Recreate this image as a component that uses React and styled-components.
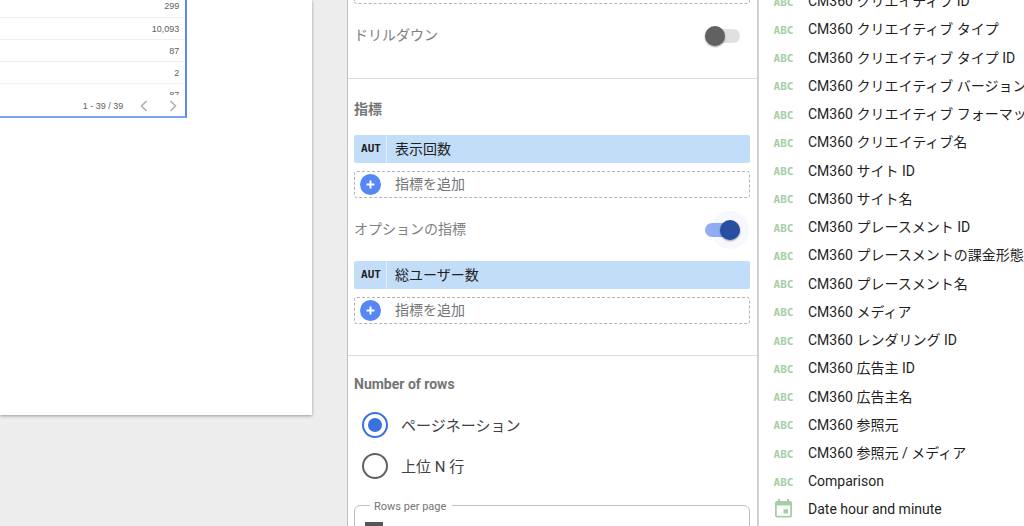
import React, {useState} from 'react';
import styled, {createGlobalStyle} from 'styled-components';

const GlobalStyle = createGlobalStyle`
    * {
        box-sizing: border-box;
    }
    body {
        margin: 0;
        background: #ededed;
        font-family: Roboto, "Noto Sans CJK JP", sans-serif;
        font-size: 14px;
        overflow: hidden;
    }
`

const Layout = styled.div`
    display: grid;
    grid-template-columns: minmax(0, 1fr) 412px 265px;
    height: 100vh;
    overflow: hidden;
`

const Canvas = styled.main`
    background: #ededed;
    padding-right: 35px;
    min-width: 0;
`

const ReportPage = styled.div`
    min-height: 415px;
    background: white;
    box-shadow: 0 1px 3px rgba(0, 0, 0, 0.35);
`

const Chart = styled.div`
    width: 60%;
    border-right: 2px solid #5a8cf0;
    border-bottom: 2px solid #7ba2f2;
    font-family: "Liberation Sans", sans-serif;
    font-size: 9px;
    color: #616161;
`

const ChartBody = styled.div`
    display: flex;
    flex-direction: column;
    justify-content: flex-end;
    height: 95px;
    overflow: hidden;
`

const ChartTable = styled.table`
    width: 100%;
    border-collapse: collapse;
    margin-bottom: -11px;

    td {
        height: 22px;
        padding: 0 6px 0 0;
        border-bottom: 1px solid #f0f0f0;
        text-align: right;
        line-height: 20px;
    }
`

const Pager = styled.div`
    display: flex;
    justify-content: flex-end;
    align-items: center;
    height: 21px;
    padding-right: 4px;
`

const PagerButton = styled.button`
    display: flex;
    justify-content: center;
    width: 16px;
    margin-left: 13px;
    padding: 0;
    border: none;
    background: none;
    cursor: pointer;
`

const Panel = styled.section`
    background: white;
    border-left: 1px solid #bdc1c6;
    border-right: 2px solid #d0d0d8;
    overflow: hidden;
`

const Section = styled.div`
    display: flex;
    flex-direction: column;
    padding: 0 7px 0 6px;
    border-bottom: ${props => props.last ? "none" : "1px solid #dcdcdc"};
    height: ${props => props.height || "auto"};
`

const DropZone = styled.div`
    height: 4px;
    border: 1px dashed #b4b4b4;
    border-top: none;
    border-radius: 0 0 3px 3px;
`

const Heading = styled.h3`
    margin: 0;
    padding-top: ${props => props.spaced ? "20px" : "18px"};
    font-size: 14px;
    line-height: 20px;
    font-weight: bold;
    color: #757575;
`

const ToggleRow = styled.label`
    display: flex;
    justify-content: space-between;
    align-items: center;
    height: 63px;
    padding-right: 10px;
    color: #808080;
`

const RowText = styled.span`
    padding-bottom: 3px;
`

const Toggle = styled.input`
    appearance: none;
    position: relative;
    width: 35px;
    height: 20px;
    margin: 0;
    cursor: pointer;

    &::before {
        content: "";
        position: absolute;
        top: 3px;
        left: 0;
        width: 35px;
        height: 14px;
        border-radius: 7px;
        background: #e0e0e0;
    }
    &::after {
        content: "";
        position: absolute;
        top: 0;
        left: 0;
        width: 20px;
        height: 20px;
        border-radius: 50%;
        background: #616161;
        box-shadow: 0 1px 2px rgba(0, 0, 0, 0.4);
    }
    &:checked::before {
        background: #91aff2;
    }
    &:checked::after {
        left: 15px;
        background: #274ea0;
        box-shadow: 0 1px 2px rgba(0, 0, 0, 0.4), 0 0 0 9px rgba(80, 110, 240, 0.05);
    }
`

const Chip = styled.div`
    display: flex;
    align-items: center;
    height: 28px;
    margin-top: ${props => props.spaced ? "16px" : "0"};
    border-radius: 2px;
    background: #c2ddf8;
    color: #212121;
`

const ChipType = styled.span`
    width: 33px;
    padding-left: 2px;
    line-height: 28px;
    border-right: 1px solid #e4f0fc;
    font-family: "DejaVu Sans Mono", monospace;
    font-size: 11px;
    font-weight: bold;
    text-align: center;
`

const ChipName = styled.span`
    padding: 0 0 2px 8px;
`

const AddButton = styled.button`
    display: flex;
    align-items: center;
    gap: 14px;
    height: 27px;
    margin-top: 8px;
    padding: 0 5px;
    border: 1px dashed #b4b4b4;
    border-radius: 3px;
    background: white;
    color: #757575;
    font: inherit;
    cursor: pointer;
`

const AddText = styled.span`
    padding-bottom: 3px;
`

const RadioGroup = styled.div`
    display: flex;
    flex-direction: column;
    gap: 15px;
    padding: 18px 0 0 8px;
`

const RadioLabel = styled.label`
    display: flex;
    align-items: center;
    gap: 13px;
    height: 26px;
    font-size: 15px;
    color: #424242;
`

const Radio = styled.input`
    appearance: none;
    width: 26px;
    height: 26px;
    margin: 0;
    padding: 4px;
    border: 2px solid #5f6368;
    border-radius: 50%;
    cursor: pointer;

    &:checked {
        border-color: #3871e0;
        background: #3871e0;
        background-clip: content-box;
    }
`

const RadioText = styled.span`
    padding-bottom: 2px;
`

const RowsField = styled.fieldset`
    margin: 17px 0 0;
    padding: 8px 10px;
    border: 1px solid #c0c0c0;
    border-radius: 6px;
    min-width: 0;

    legend {
        margin-left: 5px;
        padding: 4px 6px 0 4px;
        font-size: 11px;
        line-height: 14px;
        color: #757575;
    }
`

const RowsValue = styled.div`
    width: 18px;
    height: 14px;
    background: #555;
`

const Fields = styled.aside`
    background: white;
    overflow: hidden;
`

const FieldList = styled.ul`
    display: flex;
    flex-direction: column;
    justify-content: space-between;
    height: calc(100vh + 11px);
    margin: -14px 0 0;
    padding: 0;
    list-style: none;
`

const Field = styled.li`
    display: flex;
    flex-shrink: 0;
    align-items: center;
    height: 28px;
    color: #1f1f1f;
    white-space: nowrap;
`

const FieldType = styled.span`
    display: flex;
    justify-content: center;
    flex-shrink: 0;
    width: 49px;
    padding-top: ${props => props.text ? "4px" : "0"};
    font-family: "DejaVu Sans Mono", monospace;
    font-size: 11px;
    font-weight: bold;
    color: #a5cfa5;
`

const values = ["299", "10,093", "87", "2", "87"];

const fields = [
    "CM360 クリエイティブ ID",
    "CM360 クリエイティブ タイプ",
    "CM360 クリエイティブ タイプ ID",
    "CM360 クリエイティブ バージョン",
    "CM360 クリエイティブ フォーマット",
    "CM360 クリエイティブ名",
    "CM360 サイト ID",
    "CM360 サイト名",
    "CM360 プレースメント ID",
    "CM360 プレースメントの課金形態",
    "CM360 プレースメント名",
    "CM360 メディア",
    "CM360 レンダリング ID",
    "CM360 広告主 ID",
    "CM360 広告主名",
    "CM360 参照元",
    "CM360 参照元 / メディア",
    "Comparison",
    "Date hour and minute",
];

const Chevron = ({d}) => (
    <svg width="8" height="12" viewBox="0 0 8 12" fill="none" stroke="#b0b0b0" strokeWidth="1.6">
        <path d={d}/>
    </svg>
);

const PlusIcon = () => (
    <svg width="21" height="21" viewBox="0 0 20 20">
        <circle cx="10" cy="10" r="10" fill="#5787f5"/>
        <path d="M10 6.2v7.6M6.2 10h7.6" stroke="white" strokeWidth="1.8"/>
    </svg>
);

const CalendarIcon = () => (
    <svg width="17" height="19" viewBox="0 0 17 19">
        <path
            fill="#a5cfa5"
            fillRule="evenodd"
            d="M3 0h2v2h7V0h2v2h1a2 2 0 0 1 2 2v12.500a2 2 0 0 1-2 2H2a2 2 0 0 1-2-2V4a2 2 0 0 1 2-2h1zM1.800 6.500v10.200h13.400V6.500zM8.500 10.200h4.600v4.400H8.500z"
        />
    </svg>
);

const Metric = ({name, spaced}) => (
    <>
        <Chip spaced={spaced}>
            <ChipType>AUT</ChipType>
            <ChipName>{name}</ChipName>
        </Chip>
        <AddButton type="button">
            <PlusIcon/>
            <AddText>指標を追加</AddText>
        </AddButton>
    </>
);

const App = () => {
    const [drillDown, setDrillDown] = useState(false);
    const [optional, setOptional] = useState(true);
    const [mode, setMode] = useState("pages");

    return (
        <Layout>
            <GlobalStyle/>
            <Canvas>
                <ReportPage>
                    <Chart>
                        <ChartBody>
                            <ChartTable>
                                <tbody>
                                    {values.map((value, i) => (
                                        <tr key={i}><td>{value}</td></tr>
                                    ))}
                                </tbody>
                            </ChartTable>
                        </ChartBody>
                        <Pager>
                            1 - 39 / 39
                            <PagerButton aria-label="Previous">
                                <Chevron d="M6.500 1L1.500 6l5 5"/>
                            </PagerButton>
                            <PagerButton aria-label="Next">
                                <Chevron d="M1.500 1l5 5-5 5"/>
                            </PagerButton>
                        </Pager>
                    </Chart>
                </ReportPage>
            </Canvas>

            <Panel>
                <Section height="79px">
                    <DropZone/>
                    <ToggleRow>
                        <RowText>ドリルダウン</RowText>
                        <Toggle
                            type="checkbox"
                            checked={drillDown}
                            onChange={() => setDrillDown(!drillDown)}
                        />
                    </ToggleRow>
                </Section>

                <Section height="277px">
                    <Heading spaced>指標</Heading>
                    <Metric name="表示回数" spaced/>
                    <ToggleRow>
                        <RowText>オプションの指標</RowText>
                        <Toggle
                            type="checkbox"
                            checked={optional}
                            onChange={() => setOptional(!optional)}
                        />
                    </ToggleRow>
                    <Metric name="総ユーザー数"/>
                </Section>

                <Section last>
                    <Heading>Number of rows</Heading>
                    <RadioGroup>
                        <RadioLabel>
                            <Radio
                                type="radio"
                                name="rows"
                                checked={mode === "pages"}
                                onChange={() => setMode("pages")}
                            />
                            <RadioText>ページネーション</RadioText>
                        </RadioLabel>
                        <RadioLabel>
                            <Radio
                                type="radio"
                                name="rows"
                                checked={mode === "top"}
                                onChange={() => setMode("top")}
                            />
                            <RadioText>上位 N 行</RadioText>
                        </RadioLabel>
                    </RadioGroup>
                    <RowsField>
                        <legend>Rows per page</legend>
                        <RowsValue/>
                    </RowsField>
                </Section>
            </Panel>

            <Fields>
                <FieldList>
                    {fields.map(name => (
                        <Field key={name}>
                            {name.startsWith("Date")
                                ? <FieldType><CalendarIcon/></FieldType>
                                : <FieldType text>ABC</FieldType>}
                            {name}
                        </Field>
                    ))}
                </FieldList>
            </Fields>
        </Layout>
    );
};

export default App;
